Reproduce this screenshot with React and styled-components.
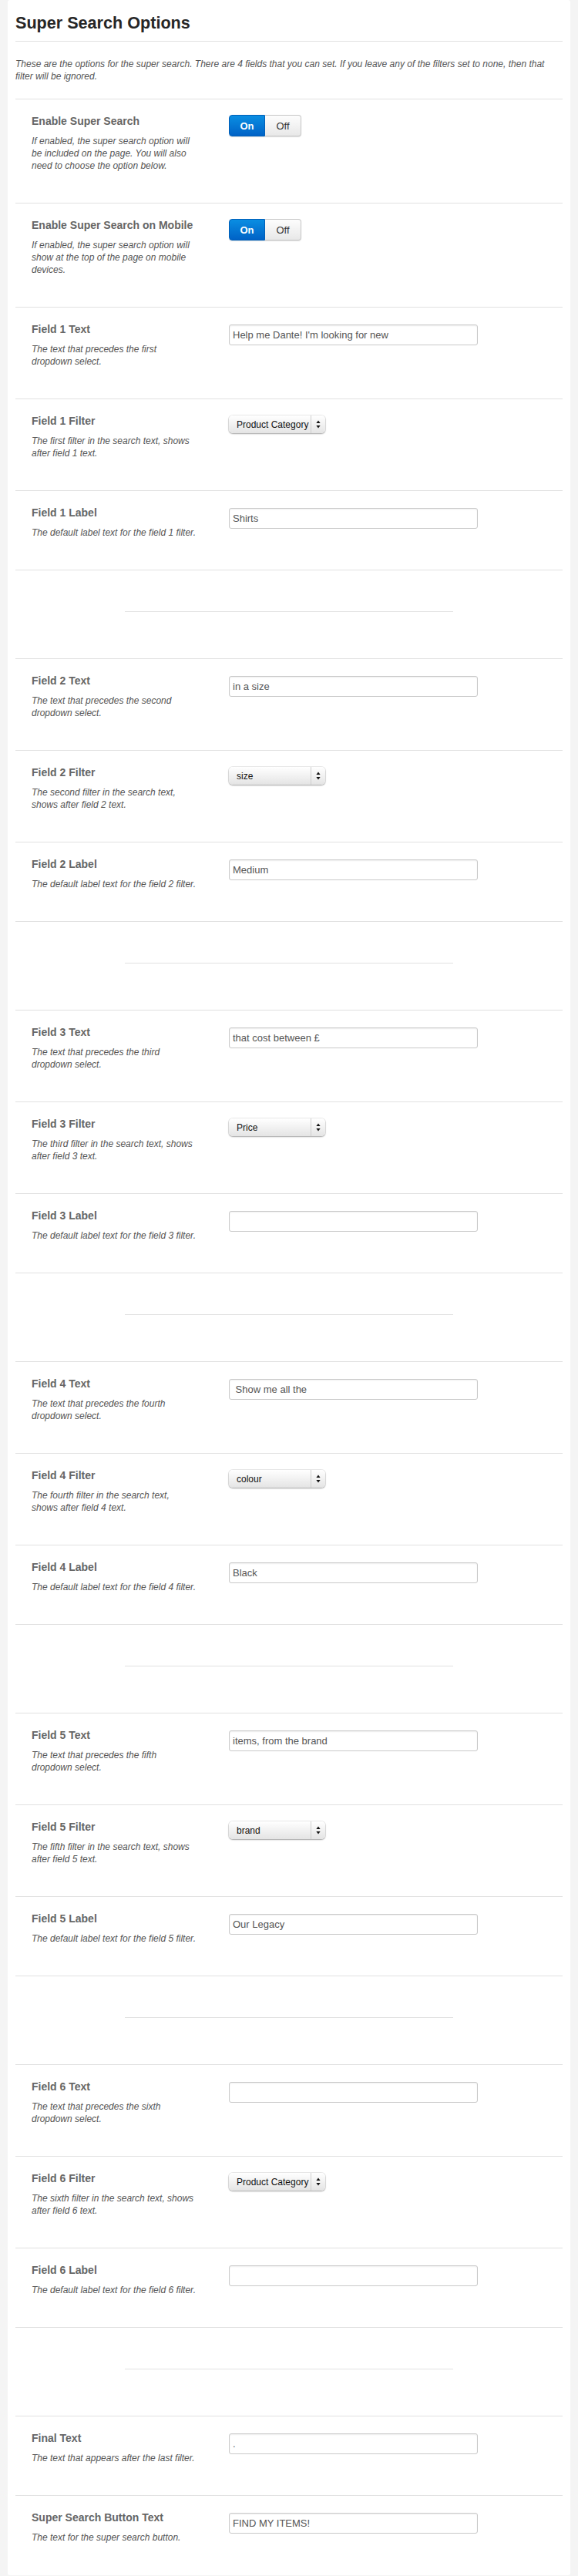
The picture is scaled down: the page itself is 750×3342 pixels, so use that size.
import React from 'react';
import styled, { createGlobalStyle } from 'styled-components';

const GlobalStyle = createGlobalStyle`
  body {
    margin: 0;
    background: #f4f4f4;
    font-family: "Liberation Sans", Arial, Helvetica, sans-serif;
  }
`;

const ordinals = ['first', 'second', 'third', 'fourth', 'fifth', 'sixth'];

const fields = [
  { text: "Help me Dante! I'm looking for new", filter: 'Product Category', label: 'Shirts' },
  { text: 'in a size', filter: 'size', label: 'Medium' },
  { text: 'that cost between £', filter: 'Price', label: '' },
  { text: ' Show me all the', filter: 'colour', label: 'Black' },
  { text: 'items, from the brand', filter: 'brand', label: 'Our Legacy' },
  { text: '', filter: 'Product Category', label: '' },
];

const Toggle = () => (
  <ToggleWrap>
    <ToggleOption $active>On</ToggleOption>
    <ToggleOption>Off</ToggleOption>
  </ToggleWrap>
);

const Select = ({ value }) => (
  <SelectBox>
    <SelectValue>{value}</SelectValue>
    <SelectArrows>
      <svg width="6" height="11" viewBox="0 0 6 11">
        <path d="M3 0.5 L5.6 4 L0.4 4 Z" fill="#111" />
        <path d="M3 10.5 L5.6 7 L0.4 7 Z" fill="#111" />
      </svg>
    </SelectArrows>
  </SelectBox>
);

const Option = ({ title, desc, children, last }) => (
  <Row $last={last}>
    <div>
      <Label>{title}</Label>
      <Desc>{desc}</Desc>
    </div>
    <Control>{children}</Control>
  </Row>
);

const App = () => (
  <>
    <GlobalStyle />
    <Card>
      <Title>Super Search Options</Title>
      <Intro>
        These are the options for the super search. There are 4 fields that you can set. If you leave
        any of the filters set to none, then that filter will be ignored.
      </Intro>

      <Option
        title="Enable Super Search"
        desc="If enabled, the super search option will be included on the page. You will also need to choose the option below."
      >
        <Toggle />
      </Option>
      <Option
        title="Enable Super Search on Mobile"
        desc="If enabled, the super search option will show at the top of the page on mobile devices."
      >
        <Toggle />
      </Option>

      {fields.map((f, i) => (
        <React.Fragment key={i}>
          <Option
            title={`Field ${i + 1} Text`}
            desc={`The text that precedes the ${ordinals[i]} dropdown select.`}
          >
            <TextInput type="text" defaultValue={f.text} />
          </Option>
          <Option
            title={`Field ${i + 1} Filter`}
            desc={`The ${ordinals[i]} filter in the search text, shows after field ${i + 1} text.`}
          >
            <Select value={f.filter} />
          </Option>
          <Option
            title={`Field ${i + 1} Label`}
            desc={`The default label text for the field ${i + 1} filter.`}
          >
            <TextInput type="text" defaultValue={f.label} />
          </Option>
          <Spacer>
            <ShortRule />
          </Spacer>
        </React.Fragment>
      ))}

      <Option title="Final Text" desc="The text that appears after the last filter.">
        <TextInput type="text" defaultValue="." />
      </Option>
      <Option title="Super Search Button Text" desc="The text for the super search button." last>
        <TextInput type="text" defaultValue="FIND MY ITEMS!" />
      </Option>
    </Card>
  </>
);

const Card = styled.div`
  margin: 0 10px;
  padding: 0 10px 1px;
  background: #fff;
  border-radius: 0 0 3px 3px;
  border-top-left-radius: 3px;
  border-top-right-radius: 3px;
`;

const Title = styled.h2`
  margin: 0;
  padding: 17px 0 10px;
  font-size: 21.6px;
  line-height: 26px;
  font-weight: bold;
  color: #262626;
  border-bottom: 1px solid #e1e1e1;
`;

const Intro = styled.p`
  margin: 0;
  padding: 21px 0 21px;
  font-size: 12px;
  line-height: 16px;
  font-style: italic;
  color: #555;
  border-bottom: 1px solid #e1e1e1;
`;

const Row = styled.div`
  display: grid;
  grid-template-columns: 215px 1fr;
  column-gap: 41px;
  padding: 19px 21px 40px;
  border-bottom: ${(p) => (p.$last ? 'none' : '1px solid #e1e1e1')};
`;

const Label = styled.div`
  font-size: 14px;
  line-height: 18px;
  font-weight: bold;
  color: #666;
  margin-bottom: 9px;
`;

const Desc = styled.div`
  font-size: 12px;
  line-height: 16px;
  font-style: italic;
  color: #555;
`;

const Control = styled.div`
  display: flex;
  align-items: flex-start;
`;

const TextInput = styled.input`
  box-sizing: border-box;
  width: 323px;
  height: 27px;
  margin: 3px 0 0;
  padding: 0 4px;
  border: 1px solid #c9c9c9;
  border-radius: 3px;
  box-shadow: inset 0 1px 2px rgba(0, 0, 0, 0.07);
  font-family: "Liberation Sans", Arial, sans-serif;
  font-size: 13px;
  color: #555;
  background: #fff;
  outline: none;
`;

const SelectBox = styled.div`
  box-sizing: border-box;
  display: flex;
  width: 125px;
  height: 23px;
  margin-top: 2px;
  border-radius: 5px;
  background: linear-gradient(#ffffff, #f3f3f3 45%, #e4e4e4);
  box-shadow: 0 0 0 1px rgba(0, 0, 0, 0.08), 0 1px 2px rgba(0, 0, 0, 0.3);
  font-size: 12px;
  color: #111;
`;

const SelectValue = styled.div`
  flex: 1;
  display: flex;
  align-items: center;
  padding-left: 10px;
  white-space: nowrap;
  overflow: hidden;
`;

const SelectArrows = styled.div`
  width: 18px;
  display: flex;
  align-items: center;
  justify-content: center;
  border-left: 1px solid #cfcfcf;
`;

const ToggleWrap = styled.div`
  display: flex;
  margin-top: 1px;
  height: 28px;
  border-radius: 4px;
  box-shadow: 0 1px 1px rgba(0, 0, 0, 0.12);
`;

const ToggleOption = styled.div`
  box-sizing: border-box;
  width: 47px;
  display: flex;
  align-items: center;
  justify-content: center;
  font-size: 13px;
  font-weight: ${(p) => (p.$active ? 'bold' : 'normal')};
  color: ${(p) => (p.$active ? '#fff' : '#333')};
  background: ${(p) =>
    p.$active ? 'linear-gradient(#0a8ee2, #0062c6)' : 'linear-gradient(#fdfdfd, #e8e8e8)'};
  border: 1px solid ${(p) => (p.$active ? '#005fb8' : '#c6c6c6')};
  border-radius: ${(p) => (p.$active ? '4px 0 0 4px' : '0 4px 4px 0')};
  ${(p) => !p.$active && 'border-left: none;'}
`;

const Spacer = styled.div`
  padding: 53px 0 60px;
  border-bottom: 1px solid #e1e1e1;
`;

const ShortRule = styled.div`
  width: 426px;
  height: 1px;
  margin: 0 auto;
  background: #e1e1e1;
`;

export default App;
